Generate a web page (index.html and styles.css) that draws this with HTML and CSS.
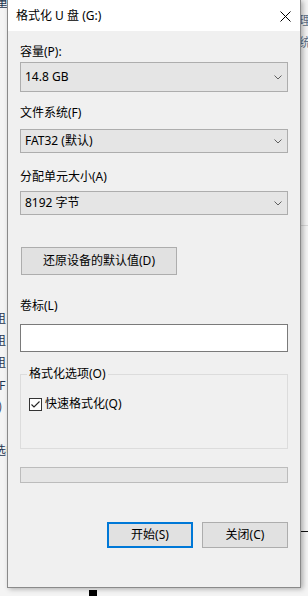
FILE: index.html
```html
<!DOCTYPE html>
<html lang="zh-CN">
<head>
<meta charset="utf-8">
<title>格式化 U 盘 (G:)</title>
<link rel="stylesheet" href="styles.css">
</head>
<body>
<div class="desktop">
  <span class="frag fl1">重</span>
  <span class="frag fl2">组</span>
  <span class="frag fl3">组</span>
  <span class="frag fl4">组</span>
  <span class="frag fl5">(F</span>
  <span class="frag fl6">:)</span>
  <span class="frag fl7">选中</span>
  <span class="frag fr1">理</span>
  <span class="frag fr2">统</span>
  <div class="strip-right-line"></div>
  <div class="strip-right-dark"></div>
  <div class="bottom-black"></div>
</div>

<div class="dialog">
  <div class="titlebar">
    <span class="title">格式化 U 盘 (G:)</span>
    <svg class="close" width="11" height="11" viewBox="0 0 11 11"><path d="M0.5 0.5 L10.5 10.5 M10.5 0.5 L0.5 10.5" stroke="#000" stroke-width="1" fill="none"/></svg>
  </div>
  <div class="content">
    <div class="label lab-cap">容量(P):</div>
    <div class="combo combo-tall"><span>14.8 GB</span><svg class="chev" width="8" height="5" viewBox="0 0 8 5"><path d="M0.5 0.5 L4 4 L7.5 0.5" stroke="#606060" fill="none"/></svg></div>

    <div class="label lab-fs">文件系统(F)</div>
    <div class="combo combo-fs"><span>FAT32 (默认)</span><svg class="chev" width="8" height="5" viewBox="0 0 8 5"><path d="M0.5 0.5 L4 4 L7.5 0.5" stroke="#606060" fill="none"/></svg></div>

    <div class="label lab-au">分配单元大小(A)</div>
    <div class="combo combo-au"><span>8192 字节</span><svg class="chev" width="8" height="5" viewBox="0 0 8 5"><path d="M0.5 0.5 L4 4 L7.5 0.5" stroke="#606060" fill="none"/></svg></div>

    <button class="btn btn-restore">还原设备的默认值(D)</button>

    <div class="label lab-vol">卷标(L)</div>
    <div class="textbox"></div>

    <fieldset class="group">
      <legend>格式化选项(O)</legend>
      <label class="check">
        <span class="box"><svg width="11" height="11" viewBox="0 0 11 11"><path d="M1.5 5.5 L4 8 L9.5 2.5" stroke="#222" stroke-width="1.1" fill="none"/></svg></span>
        <span>快速格式化(Q)</span>
      </label>
    </fieldset>

    <div class="progress"></div>

    <div class="actions">
      <button class="btn btn-primary">开始(S)</button>
      <button class="btn btn-close">关闭(C)</button>
    </div>
  </div>
</div>
</body>
</html>
```

FILE: styles.css
```css
* { box-sizing: border-box; }

html, body {
  margin: 0;
  padding: 0;
}

body {
  width: 308px;
  height: 596px;
  overflow: hidden;
  position: relative;
  background: #f4f4f4;
  font-family: "Noto Sans", "Noto Sans CJK SC", sans-serif;
  font-size: 12px;
  color: #000;
}

/* background desktop fragments */
.desktop {
  position: absolute;
  inset: 0;
  z-index: 0;
}
.frag {
  position: absolute;
  font-family: "Noto Sans CJK SC", sans-serif;
  font-size: 12px;
  line-height: 14px;
  color: #1e3550;
}
.fl1 { left: -4px; top: -5px; }
.fl2 { left: -6px; top: 311px; }
.fl3 { left: -6px; top: 333px; }
.fl4 { left: -6px; top: 355px; }
.fl5 { left: -5px; top: 378px; }
.fl6 { left: -5px; top: 399px; }
.fl7 { left: -6px; top: 443px; }
.fr1 { left: 299px; top: 13px; color: #5a6f88; }
.fr2 { left: 299px; top: 35px; color: #5a6f88; }
.strip-right-line {
  position: absolute;
  left: 300px; top: 225px;
  width: 8px; height: 1px;
  background: #d8d8d8;
}
.strip-right-dark {
  position: absolute;
  left: 300px; top: 531px;
  width: 8px; height: 1px;
  background: #111;
}
.bottom-black {
  position: absolute;
  left: 89px; top: 590px;
  width: 8px; height: 6px;
  background: #000;
}

/* dialog window */
.dialog {
  position: relative;
  z-index: 1;
  margin-left: 7px;
  width: 294px;
  background: #f0f0f0;
  border: 1px solid #8a8a8a;
  border-top: none;
  box-shadow: 2px 1px 5px rgba(0, 0, 0, 0.3);
}

.titlebar {
  height: 31px;
  background: #fff;
  display: flex;
  align-items: center;
  justify-content: space-between;
  padding-left: 8px;
  padding-right: 9px;
}
.title {
  line-height: 16px;
  padding-top: 1px;
}
.close {
  display: block;
  margin-top: 1px;
}

.content {
  padding: 13px 12px 39px 12px;
  display: flex;
  flex-direction: column;
  align-items: stretch;
}

.label {
  height: 16px;
  line-height: 16px;
  white-space: nowrap;
}
.lab-fs { margin-top: 13px; }
.lab-au { margin-top: 16px; }
.lab-vol { margin-top: 23px; }

.combo {
  display: flex;
  align-items: center;
  justify-content: space-between;
  background: #e5e5e5;
  border: 1px solid #adadad;
  padding: 0 4px 0 4px;
  height: 24px;
  line-height: 16px;
}
.combo-tall { height: 30px; margin-top: 2px; }
.combo-fs { margin-top: 8px; }
.combo-au { margin-top: 6px; }
.chev { display: block; margin-right: 1px; }

.btn {
  font: inherit;
  color: #000;
  background: #e1e1e1;
  border: 1px solid #adadad;
  padding: 0;
  line-height: 16px;
  border-radius: 0;
}
.btn-restore {
  align-self: flex-start;
  margin-top: 32px;
  margin-left: 1px;
  width: 156px;
  height: 28px;
}

.textbox {
  margin-top: 10px;
  height: 28px;
  background: #fff;
  border: 1px solid #7a7a7a;
}

.group {
  margin: 14px 0 0 0;
  padding: 14px 0 36px 0;
  border: 1px solid #dcdcdc;
  min-width: 0;
}
.group legend {
  margin-left: 6px;
  padding: 0 2px;
  line-height: 16px;
}
.check {
  display: flex;
  align-items: center;
  gap: 3px;
  line-height: 16px;
  margin-left: 8px;
}
.box {
  width: 13px;
  height: 13px;
  border: 1px solid #333;
  background: #fff;
  display: flex;
  align-items: center;
  justify-content: center;
}
.box svg { display: block; }

.progress {
  margin-top: 18px;
  height: 16px;
  background: #e6e6e6;
  border: 1px solid #bcbcbc;
}

.actions {
  margin-top: 39px;
  display: flex;
  justify-content: flex-end;
  gap: 9px;
}
.actions .btn {
  width: 86px;
  height: 26px;
}
.btn-primary {
  border: 2px solid #0078d7;
}
```
